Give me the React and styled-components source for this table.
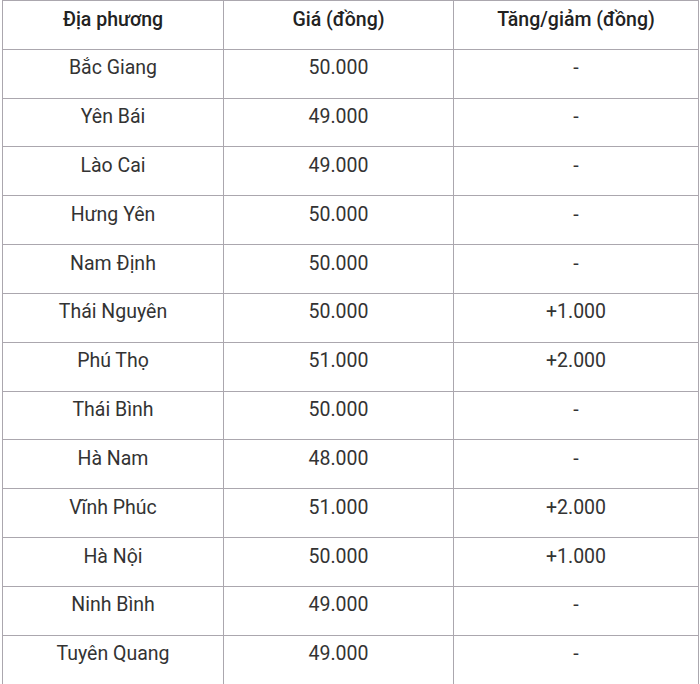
import React from "react";
import styled, { createGlobalStyle } from "styled-components";

const Global = createGlobalStyle`
  html, body { margin: 0; padding: 0; background: #fff; }
  body { font-family: Roboto, "Noto Sans", Arial, sans-serif; }
`;

const Wrap = styled.div`
  padding: 0 2px;
`;

const Table = styled.table`
  border-collapse: collapse;
  width: 696px;
  table-layout: fixed;
  color: #333;
  font-size: 19.5px;
`;

const Col = styled.col`
  width: ${(p) => p.$w}px;
`;

const Cell = styled.td`
  border: 1px solid #aba7ae;
  padding: 7.5px 8px 18.33px;
  line-height: 22px;
  height: 22px;
  text-align: center;
  vertical-align: top;
  font-weight: ${(p) => (p.$head ? 500 : 400)};
  color: ${(p) => (p.$head ? "#222" : "#333")};
`;

const rows = [
  ["Bắc Giang", "50.000", "-"],
  ["Yên Bái", "49.000", "-"],
  ["Lào Cai", "49.000", "-"],
  ["Hưng Yên", "50.000", "-"],
  ["Nam Định", "50.000", "-"],
  ["Thái Nguyên", "50.000", "+1.000"],
  ["Phú Thọ", "51.000", "+2.000"],
  ["Thái Bình", "50.000", "-"],
  ["Hà Nam", "48.000", "-"],
  ["Vĩnh Phúc", "51.000", "+2.000"],
  ["Hà Nội", "50.000", "+1.000"],
  ["Ninh Bình", "49.000", "-"],
  ["Tuyên Quang", "49.000", "-"],
];

export default function App() {
  return (
    <Wrap>
      <Global />
      <Table>
        <colgroup>
          <Col $w={221} />
          <Col $w={230} />
          <Col $w={245} />
        </colgroup>
        <tbody>
          <tr>
            <Cell $head>Địa phương</Cell>
            <Cell $head>Giá (đồng)</Cell>
            <Cell $head>Tăng/giảm (đồng)</Cell>
          </tr>
          {rows.map((r) => (
            <tr key={r[0]}>
              {r.map((c, i) => (
                <Cell key={i}>{c}</Cell>
              ))}
            </tr>
          ))}
        </tbody>
      </Table>
    </Wrap>
  );
}
